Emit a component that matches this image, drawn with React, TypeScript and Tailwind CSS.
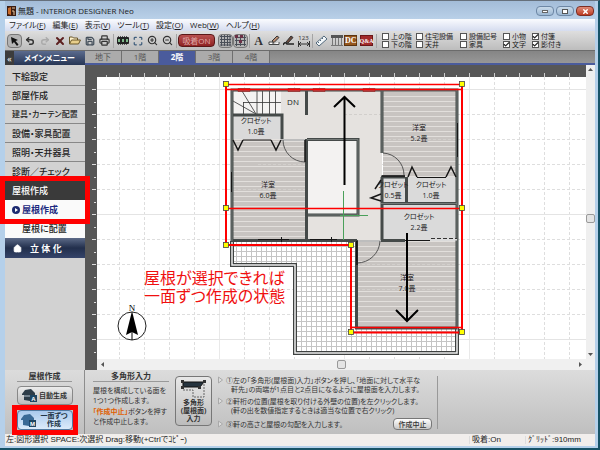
import { useState } from "react";
import type { ReactNode } from "react";
import { Check, Home, Maximize, Printer, Redo2, Save, Undo2, X, ZoomIn, ZoomOut } from "lucide-react";

const menus = [
  ["ファイル", "F"],
  ["編集", "E"],
  ["表示", "V"],
  ["ツール", "T"],
  ["設定", "O"],
  ["Web", "W"],
  ["ヘルプ", "H"],
];

const floors = ["地下", "1階", "2階", "3階", "4階"];

const sideItems = [
  { name: "下絵設定", size: "text-[9px]" },
  { name: "部屋作成", size: "text-[9px]" },
  { name: "建具・カーテン配置", size: "text-[8px]" },
  { name: "設備・家具配置", size: "text-[9px]" },
  { name: "照明・天井器具", size: "text-[9px]" },
  { name: "診断／チェック", size: "text-[9px]" },
];

const layers = [
  { items: ["上の階", "下の階"], checked: [false, false], width: "w-[34px]" },
  { items: ["住宅設備", "天井"], checked: [false, false], width: "w-[44px]" },
  { items: ["設備記号", "家具"], checked: [false, false], width: "w-[43px]" },
  { items: ["小物", "文字"], checked: [false, true], width: "w-[29px]" },
  { items: ["付箋", "影付き"], checked: [true, true], width: "w-[34px]" },
];

function Tool({ label, children, pressed }: { label: string; children: ReactNode; pressed?: boolean }) {
  return (
    <button
      aria-label={label}
      className={`flex h-[14px] w-[15px] items-center justify-center rounded-sm ${
        pressed ? "border border-[#777] bg-[#b4b4b4]" : ""
      }`}
    >
      {children}
    </button>
  );
}

function Separator() {
  return <div className="mx-px h-[14px] w-px bg-[#a5a5a5]" />;
}

function TitleBar() {
  return (
    <header className="flex h-[18px] items-center bg-linear-to-b from-[#a3bcd8] to-[#b9d0e8] pl-[2px] pt-[2px]">
      <svg width="9" height="10" viewBox="0 0 9 10">
        <rect width="9" height="10" fill="#3b1c10" />
        <path d="M1 2l3-1v8l-3-1z" fill="#c96a2a" />
        <path d="M5 2h3M5 5h2v4" stroke="#e9c7a0" fill="none" />
      </svg>
      <h1 className="ml-[2px] flex-1 text-[8px] leading-none text-[#1b1b1b]">無題 - INTERIOR DESIGNER Neo</h1>
      <div className="flex gap-[2px] pr-px">
        <button aria-label="最小化" className="flex h-[10px] w-[18px] items-center justify-center rounded-sm border border-[#6d87a5] bg-linear-to-b from-[#c9daea] to-[#9db8d3]">
          <span className="h-[3px] w-[6px] border border-[#666] bg-white" />
        </button>
        <button aria-label="最大化" className="flex h-[10px] w-[18px] items-center justify-center rounded-sm border border-[#6d87a5] bg-linear-to-b from-[#c9daea] to-[#9db8d3]">
          <span className="h-[5px] w-[6px] border border-[#555] bg-white" />
        </button>
        <button aria-label="閉じる" className="flex h-[10px] w-[18px] items-center justify-center rounded-sm border border-[#7c2d22] bg-linear-to-b from-[#dd8a78] to-[#bd3a20]">
          <X size={7} strokeWidth={5} color="#fff" />
        </button>
      </div>
    </header>
  );
}

function MenuBar() {
  return (
    <nav className="flex h-[12px] items-center gap-[7px] bg-linear-to-b from-[#fafbfe] to-[#d5dcef] pl-1">
      {menus.map(([label, key]) => (
        <button key={key} className="text-[8px] leading-none text-[#222]">
          {label}(<u>{key}</u>)
        </button>
      ))}
    </nav>
  );
}

function Toolbar() {
  return (
    <div className="flex h-[19px] items-center bg-linear-to-b from-[#dedede] to-[#bdbdbd] pl-[2px] text-[#333]">
      <Tool label="選択" pressed>
        <svg width="9" height="10" viewBox="0 0 9 10">
          <path d="M1 1l1 7 2-2 3 4 1.500-1.500-3-3.500 2.500-1z" fill="#111" />
        </svg>
      </Tool>
      <Tool label="元に戻す"><Undo2 size={10} strokeWidth={3.5} /></Tool>
      <Tool label="やり直し"><Redo2 size={10} strokeWidth={3.5} color="#aaa" /></Tool>
      <Tool label="削除"><X size={12} strokeWidth={4} color="#5c1f1f" /></Tool>
      <Tool label="開く">
        <svg width="12" height="9" viewBox="0 0 12 9">
          <path d="M.5 8V1h3l1 1h4v2" fill="#fff3cc" stroke="#6a5628" />
          <path d="M.5 8l2-4h9l-2 4z" fill="#e8cf8c" stroke="#6a5628" />
        </svg>
      </Tool>
      <Tool label="保存"><Save size={10} strokeWidth={3} color="#45505c" /></Tool>
      <Tool label="印刷"><Printer size={11} strokeWidth={2.5} /></Tool>
      <Separator />
      <Tool label="部材表示">
        <svg width="12" height="9" viewBox="0 0 12 9">
          <rect y="1" width="12" height="7" rx="1" fill="#222" />
          <path d="M1 3h2v3H1zM5 3h2v3H5zM9 3h2v3H9z" fill="#7fb88a" />
          <path d="M1 .5h10M1 8.500h10" stroke="#555" strokeDasharray="1 1" />
        </svg>
      </Tool>
      <Tool label="全体表示"><Maximize size={10} strokeWidth={3} color="#3f5e7d" /></Tool>
      <Tool label="拡大"><ZoomIn size={11} strokeWidth={2.5} /></Tool>
      <Tool label="縮小"><ZoomOut size={11} strokeWidth={2.5} /></Tool>
      <Separator />
      <button className="h-[13px] w-[37px] rounded-sm border border-[#5a1818] bg-linear-to-b from-[#b85050] to-[#8e2222] text-[8px] leading-none text-[#e0aaaa]">
        吸着ON
      </button>
      <div className="ml-[3px] flex">
        <Tool label="グリッド" pressed>
          <svg width="11" height="11" viewBox="0 0 11 11">
            <path d="M1.500 0v11M4.500 0v11M7.500 0v11M10 0v11M0 1.500h11M0 4.500h11M0 7.500h11M0 10h11" stroke="#4a4f58" />
          </svg>
        </Tool>
        <Tool label="グリッド吸着" pressed>
          <svg width="11" height="11" viewBox="0 0 11 11">
            <path d="M1.500 0v11M5.500 0v11M9.500 0v11M0 2.500h11M0 5.500h11M0 9.500h11" stroke="#4a4f58" />
            <path d="M0 0h3v3H0zM5 0h3v3H5zM4 5h3v3H4z" fill="#6b3146" />
          </svg>
        </Tool>
      </div>
      <Separator />
      <button aria-label="文字" className="w-[15px] font-['Liberation_Serif',serif] text-[12px] font-bold leading-none">A</button>
      <Tool label="消しゴム">
        <svg width="12" height="11" viewBox="0 0 12 11">
          <path d="M4 6l5-5 2 1.500-5 5z" fill="#b98b70" stroke="#333" />
          <path d="M1 7h4v2.500H1zM5 9.500h6V7" fill="#fff" stroke="#444" />
        </svg>
      </Tool>
      <Tool label="ペン">
        <svg width="12" height="11" viewBox="0 0 12 11">
          <path d="M3 7l5-6 2 1.500-5 5.500z" fill="#6b4a3c" stroke="#333" />
          <path d="M0 10q2-4 4-1h7" fill="none" stroke="#222" strokeWidth="1.500" />
        </svg>
      </Tool>
      <button aria-label="寸法" className="flex w-[15px] flex-col items-center text-[6px] leading-[6px]">
        123
        <svg width="12" height="6" viewBox="0 0 12 6">
          <path d="M.5 0v6M11.500 0v6M1 3h10M3 1L1 3l2 2M9 1l2 2-2 2" fill="none" stroke="#333" />
        </svg>
      </button>
      <Separator />
      <Tool label="定規">
        <svg width="13" height="12" viewBox="0 0 13 12">
          <path d="M1 8l8-7 3 3-8 7z" fill="#f3f8fb" stroke="#52697c" />
          <path d="M3 7l1 1M5 5l1 1M7 3l1 1" stroke="#52697c" />
        </svg>
      </Tool>
      <Tool label="一覧表">
        <svg width="12" height="11" viewBox="0 0 12 11">
          <path d="M0 0h12v3H0z" fill="#555" />
          <path d="M1.500 3v7M4.500 3v7M7.500 3v7M10.500 3v7M0 10.500h12" stroke="#777" />
        </svg>
      </Tool>
      <button className="h-[11px] w-[13px] border border-[#5c3410] bg-[#96561c] font-['Liberation_Serif',serif] text-[8px] font-bold leading-none text-white">DC</button>
      <button className="ml-[3px] mr-[2px] flex h-[11px] w-[13px] items-center justify-center border border-[#6b1717] bg-[#a12a2a] font-['Liberation_Serif',serif] text-[6px] font-bold leading-none text-white">Q&amp;A</button>
      <Separator />
      <div className="flex pl-1">
        {layers.map((group) => (
          <div key={group.items[0]} className={`flex flex-col ${group.width}`}>
            {group.items.map((name, i) => (
              <label key={name} className="flex h-[8px] items-center gap-[2px] whitespace-nowrap text-[7px] leading-none text-[#222]">
                <span className="relative flex">
                  <input
                    type="checkbox"
                    defaultChecked={group.checked[i]}
                    className="peer size-[7px] appearance-none border border-[#555] bg-white"
                  />
                  <Check size={7} strokeWidth={4} className="pointer-events-none absolute inset-0 hidden peer-checked:block" />
                </span>
                {name}
              </label>
            ))}
          </div>
        ))}
      </div>
    </div>
  );
}

function FloorTabs() {
  const [floor, setFloor] = useState("2階");

  return (
    <div className="flex h-[15px] border-t border-[#6b6b6b] bg-linear-to-b from-[#858585] to-[#9a9a9a]">
      <button aria-label="メニューを閉じる" className="w-[9px] bg-[#3c3c3c] text-[9px] leading-none text-white">«</button>
      <h2 className="flex w-[71px] items-center justify-center bg-linear-to-b from-[#5b6b8e] to-[#273655] text-[8px] font-bold leading-none text-white">
        メインメニュー
      </h2>
      <div className="flex flex-1 border-b-2 border-[#4a5b9c]">
        {floors.map((name) => (
          <button
            key={name}
            onClick={() => setFloor(name)}
            className={`w-[37px] border-r border-[#6f6f6f] text-[8px] leading-none ${
              name === floor ? "bg-[#4a5b9c] font-bold text-white" : "bg-[#ababab] text-[#555]"
            }`}
          >
            {name}
          </button>
        ))}
      </div>
    </div>
  );
}

function SideMenu() {
  return (
    <aside className="w-[80px] shrink-0 bg-[#d2d2d2] pt-[2px] text-[9px] text-[#222]">
      {sideItems.map((item) => (
        <button
          key={item.name}
          className={`block h-[19px] w-full whitespace-nowrap border-b border-[#888] pl-[7px] text-left font-medium leading-none ${item.size}`}
        >
          {item.name}
        </button>
      ))}
      <div className="relative">
        <button className="block h-[19px] w-full bg-[#3a3a3a] pl-[7px] text-left font-medium leading-none text-white">屋根作成</button>
        <button className="flex h-[19px] w-full items-center gap-[2px] bg-[#fafafa] pl-[7px] font-bold leading-none text-[#1c2a80]">
          <svg width="8" height="8" viewBox="0 0 8 8">
            <circle cx="4" cy="4" r="4" fill="#1c2a70" />
            <path d="M3 2l3 2-3 2z" fill="#fff" />
          </svg>
          屋根作成
        </button>
        <div className="pointer-events-none absolute -inset-[5px] z-10 border-[5px] border-[#f00]" />
      </div>
      <button className="block h-[19px] w-full bg-[#fafafa] pl-[17px] text-left font-medium leading-none">屋根に配置</button>
      <button className="flex h-[20px] w-full items-center gap-2 bg-linear-to-b from-[#5d6b88] via-[#222f4c] to-[#35446a] pl-2 font-bold leading-none text-white">
        <Home size={9} fill="#fff" color="#fff" />
        立 体 化
      </button>
    </aside>
  );
}

const rooms = [
  { x: 256, y: 122, lines: ["クロゼット", "1.0畳"] },
  { x: 268, y: 186, lines: ["洋室", "6.0畳"] },
  { x: 419, y: 129, lines: ["洋室", "5.2畳"] },
  { x: 393, y: 186, lines: ["クロゼット", "0.5畳"] },
  { x: 431, y: 186, lines: ["クロゼット", "1.0畳"] },
  { x: 419, y: 218, lines: ["クロゼット", "2.2畳"] },
  { x: 407, y: 279, lines: ["洋室", "7.0畳"] },
];

const handles = [
  [226, 83],
  [462, 83],
  [226, 207],
  [462, 207],
  [226, 244],
  [351, 244],
  [351, 331],
  [462, 331],
];

const columns = Array.from({ length: 19 }, (_, i) => 119.5 + i * 25);
const rows = Array.from({ length: 11 }, (_, i) => 88.5 + i * 25);

function FloorPlan() {
  return (
    <svg viewBox="85 64 501 295" preserveAspectRatio="xMinYMin slice" className="absolute inset-0 size-full">
      <defs>
        <pattern id="tatami" width="6" height="5" patternUnits="userSpaceOnUse">
          <rect width="6" height="5" fill="#c8c4c1" />
          <path d="M0 .5h6" stroke="#e2dfdc" />
        </pattern>
        <pattern id="terrace" x="1" y="0" width="5" height="5" patternUnits="userSpaceOnUse">
          <rect width="5" height="5" fill="#fff" />
          <path d="M0 .5h5M.5 0v5" stroke="#c4c4c4" />
        </pattern>
      </defs>

      {/* rulers and grid */}
      <path d="M85 64h2000v2000H85z" fill="#575757" />
      <path d="M97 76h2000v2000H97z" fill="#fff" />
      {columns.map((x, i) => (
        <g key={x}>
          <path d={`M${x} 72v4M${x - 13} 74v2`} stroke="#ccc" />
          <path d={`M${x} 76v290`} stroke={i % 5 === 4 ? "#e9e9e9" : "#dedede"} strokeDasharray={i % 5 === 4 ? undefined : "3 2"} />
        </g>
      ))}
      {rows.map((y, i) => (
        <g key={y}>
          <path d={`M92 ${y}h4M94 ${y + 13}h2`} stroke="#ddd" />
          <path d={`M97 ${y}h489`} stroke={i % 5 === 0 ? "#e4e4e4" : "#dedede"} strokeDasharray={i % 5 === 0 ? undefined : "3 2"} />
        </g>
      ))}

      {/* terrace */}
      <path d="M231.500 240v24.500h63v87.500h163V240z" fill="url(#terrace)" />
      <path d="M232 240v24h63v88h162v-26" fill="none" stroke="#3f4241" strokeWidth="4" />
      <path d="M232 240v24h63v88h162v-26" fill="none" stroke="#eee" strokeWidth="1.500" />

      {/* room fills */}
      <path d="M232 89h150v151H232z" fill="#e5e2df" />
      <path d="M233 90h48v24h-48z" fill="#f4f3f2" />
      <path d="M233 115h48v23h-48z" fill="#dadada" />
      <path d="M233 139h72v100h-72z" fill="url(#tatami)" />
      <path d="M308 139h49v75h-49z" fill="#f3f2f1" />
      <path d="M383 90h74v86h-74z" fill="url(#tatami)" />
      <path d="M382 176h75v64h-75z" fill="#dadada" />
      <path d="M357 240h100v87H357z" fill="url(#tatami)" />
      <path d="M281 138h25v2h-25zM357 239h24v2h-24z" fill="#bdbdbd" />
      <path d="M233 188.500h73M344 113.500h38M258 163.500h48M383 138.500h74M357 263.500h100M357 288.500h100" stroke="#d2cfcc" strokeDasharray="3 2" />

      {/* stairs */}
      <path d="M257 90v23M262.500 90v23M269.500 90v23M275.500 90v23M243 101.500h38M233 100l23 13M242 90l14 23M243.500 101v12" fill="none" stroke="#333" strokeWidth=".8" />

      {/* walls */}
      <g fill="none" stroke="#454a49" strokeWidth="3">
        <path d="M232 240V89h225v238M231 239.500h125M356.500 239v88h101" />
        <path d="M233 114h49v24M306.500 90v24M306.500 239V138M307 138.500h51v75.500h-50" />
        <path d="M382 90v62M381 176h24M406.500 176v26M382 176v63M381 202.500h76M355 239.500h2M381 239.500h24" />
      </g>
      <g fill="none" stroke="#7f8583" strokeWidth=".8">
        <path d="M232 240V89h225v238M307 138.500h51v75.500h-50M381 202.500h76M382 90v62" />
      </g>
      <g fill="none" stroke="#171717" strokeWidth="1">
        <path d="M243 139h28M417 176.500h29M405 239.500h25M231.500 171v20M457.500 122v34M356.500 240v20" />
        <path d="M233 139l5 10 5-10M271 139l5 10 5-10M408 176l4-10 5 10M446 176l5-10 5 10M381 193l-10 4 10 3M381 179l-6 9" strokeWidth="1.500" />
        <path d="M283 139a22 22 0 0 0 22 22M383 152a22 22 0 0 1 21 22M380 240a23 23 0 0 1-23 22" stroke="#555" />
        <path d="M305 139v22M382 175h23M357 240v24" strokeWidth="1.500" />
        <path d="M258 238.500h31M310 238.500h27M281.500 236v5M331.500 236v5" />
      </g>
      <path d="M431 238.500h26" stroke="#ddd" strokeWidth="2" />
      <path d="M431 237.500h26" stroke="#333" strokeDasharray="4 2" />
      <path d="M343.500 190v49M340 214.500h28" fill="none" stroke="#4aa05a" />

      {/* labels */}
      <g fontSize="8" textAnchor="middle" fill="#222">
        <text x="293" y="104">DN</text>
      </g>
      <g fontSize="7" textAnchor="middle" fill="#222">
        {rooms.map((room) =>
          room.lines.map((line, i) => (
            <text key={`${room.x}-${room.y}-${line}`} x={room.x} y={room.y + i * 11}>
              {line}
            </text>
          ))
        )}
      </g>

      {/* slope arrows */}
      <path d="M344.500 184V97M334 106l10.500-10 10.500 10M407 232v88M396 309l11 11 11-11" fill="none" stroke="#000" strokeWidth="2" />

      {/* roof outline */}
      <path d="M238 87.500h12v3h-12zM288 87.500h12v3h-12zM313 87.500h12v3h-12zM363 87.500h12v3h-12z" fill="#a44" stroke="#922" strokeWidth=".6" />
      <path d="M226 83.500h236M226 88.500h236M226 207.500h236M351 326.500h111" stroke="#f00" strokeWidth="1.500" />
      <path d="M226 83v161h125v87.500h111V83" fill="none" stroke="#f00" strokeWidth="2" />
      {handles.map(([x, y]) => (
        <rect key={`${x}-${y}`} x={x - 2.5} y={y - 2.5} width="5" height="5" fill="#ff0" stroke="#444" strokeWidth=".8" />
      ))}

      {/* compass */}
      <circle cx="132" cy="325" r="14" fill="#fff" stroke="#222" />
      <path d="M132 310l6 24-6-3-6 3z" fill="#000" />
      <path d="M132 331v8" stroke="#000" />
      <text x="132" y="310" fontSize="9" textAnchor="middle" fontFamily="Liberation Serif, serif">N</text>
    </svg>
  );
}

function Workspace() {
  return (
    <main className="flex min-w-0 flex-1 flex-col bg-[#f0f0f0]">
      <div className="flex min-h-0 flex-1">
        <div className="relative flex-1 overflow-hidden">
          <FloorPlan />
          <p className="absolute left-[59px] top-[204px] whitespace-nowrap text-[16px] leading-[18px] text-[#f01010]">
            屋根が選択できれば
            <br />
            一面ずつ作成の状態
          </p>
        </div>
        <div className="flex w-[9px] flex-col items-center justify-between bg-[#efefef] py-[3px]">
          <svg width="5" height="3" viewBox="0 0 5 3"><path d="M0 3l2.500-3L5 3z" fill="#555" /></svg>
          <div className="mt-3 h-[9px] w-full rounded-xs border border-[#999] bg-[#e4e4e4]" />
          <svg width="5" height="3" viewBox="0 0 5 3"><path d="M0 0h5L2.500 3z" fill="#555" /></svg>
        </div>
      </div>
      <div className="flex h-[11px] pr-[9px]">
        <div className="w-3 bg-[#575757]" />
        <div className="flex flex-1 items-center justify-between px-1">
          <svg width="3" height="5" viewBox="0 0 3 5"><path d="M3 0v5L0 2.500z" fill="#555" /></svg>
          <div className="size-[9px] rounded-xs border border-[#999] bg-[#e4e4e4]" />
          <svg width="3" height="5" viewBox="0 0 3 5"><path d="M0 0v5l3-2.500z" fill="#555" /></svg>
        </div>
      </div>
    </main>
  );
}

function RoofIcon({ letter }: { letter: string }) {
  return (
    <svg width="15" height="13" viewBox="0 0 15 13">
      <path d="M0 5l3-4 6-1 4 4v2H8v6l-6-1V6H0z" fill={letter === "M" ? "#3a6a96" : "#2d3c48"} />
      {letter === "A" && <path d="M2 7h6" stroke="#b9c6d2" />}
      <rect x="8" y="6" width="7" height="7" fill="#1d4562" />
      <text x="11.500" y="12" fontSize="6" textAnchor="middle" fill="#fff" fontFamily="Liberation Sans, sans-serif">{letter}</text>
    </svg>
  );
}

function Arrow() {
  return (
    <svg width="5" height="8" viewBox="0 0 5 8" className="shrink-0">
      <path d="M.5 1l4 3-4 3z" fill="#ddd" stroke="#aaa" />
    </svg>
  );
}

function Steps() {
  return (
    <ol className="flex flex-col gap-[3px]">
      <li className="flex gap-[3px]">
        <Arrow />
        <span>
          ①左の「多角形(屋根面)入力」ボタンを押し、「地面に対して水平な
          <br />
          <span className="ml-[5px]">軒先」の両端が1点目と2点目になるように屋根面を入力します。</span>
        </span>
      </li>
      <li className="flex gap-[3px]">
        <Arrow />
        <span>
          ②軒桁の位置(屋根を取り付ける外壁の位置)を左クリックします。
          <br />
          <span className="ml-[5px]">(軒の出を数値指定するときは適当な位置で右クリック)</span>
        </span>
      </li>
      <li className="flex items-center gap-[3px]">
        <Arrow />
        <span className="flex-1">③軒の高さと屋根の勾配を入力します。</span>
        <button className="h-[12px] w-[39px] rounded-sm border border-[#777] bg-linear-to-b from-white to-[#c8c8c8] text-[7px] font-medium leading-none">作成中止</button>
      </li>
    </ol>
  );
}

function BottomPanel() {
  return (
    <section className="flex h-[64px] bg-linear-to-b from-[#dcdcdc] to-[#bfbfbf] text-[7px] leading-[9px] text-[#333]">
      <div className="flex w-[80px] flex-col items-center border-r border-[#8d8d8d]">
        <h3 className="w-[55px] border-b border-[#999] py-px text-center text-[8px] font-bold">屋根作成</h3>
        <button className="mt-1 flex h-[19px] w-[56px] items-center justify-center gap-[2px] rounded-sm border border-[#888] bg-linear-to-b from-[#ececec] to-[#bcbcbc] font-bold">
          <RoofIcon letter="A" />
          自動生成
        </button>
        <div className="relative mt-[5px]">
          <button className="flex h-[20px] w-[56px] items-center justify-center gap-1 rounded-sm border border-[#52799f] bg-linear-to-b from-[#a9c9ec] to-[#dcebfa] font-bold leading-[8px] text-[#234]">
            <RoofIcon letter="M" />
            <span>一面ずつ<br />作成</span>
          </button>
          <div className="pointer-events-none absolute -inset-[5px] border-[5px] border-[#f00]" />
        </div>
      </div>
      <div className="w-[84px] pl-2">
        <h3 className="border-b border-[#999] py-px text-center text-[8px] font-bold">多角形入力</h3>
        <p className="mt-1 whitespace-nowrap leading-[10px]">
          屋根を構成している面を
          <br />
          1つ1つ作成します。
        </p>
        <p className="mt-px whitespace-nowrap leading-[10px]">
          <b className="text-[#e06000]">「作成中止」</b>ボタンを押す
          <br />
          と作成中止します。
        </p>
      </div>
      <button className="ml-[6px] mt-[6px] flex h-[50px] w-[37px] flex-col items-center justify-center rounded-sm border border-[#777] bg-linear-to-b from-[#e8e8e8] to-[#bcbcbc] font-bold leading-[8px]">
        <svg width="25" height="19" viewBox="0 0 25 19">
          <path d="M2 2h21l-4 5H2z" fill="#26343f" stroke="#111" />
          <path d="M2 7v3h10v7h11V2" fill="none" stroke="#666" strokeDasharray="2 1" />
          <path d="M0 0h3v3H0zM22 0h3v3h-3zM0 6h3v3H0zM17 6h3v3h-3z" fill="#333" />
        </svg>
        <span className="whitespace-nowrap">多角形<br />(屋根面)<br />入力</span>
      </button>
      <div className="mb-[5px] mt-[6px] w-[226px] whitespace-nowrap border-r border-[#999] pl-[6px] pr-[5px]">
        <Steps />
      </div>
    </section>
  );
}

function StatusBar() {
  return (
    <footer className="flex h-[12px] items-center bg-[#f1eeec] font-['Liberation_Sans','Noto_Sans_CJK_JP',sans-serif] text-[8px] leading-none text-[#222]">
      <span className="flex-1 pl-px">左:図形選択 SPACE:次選択 Drag:移動(+Ctrlでｺﾋﾟｰ)</span>
      <span className="w-[56px] border-l border-[#ddd] pl-[2px]">吸着:On</span>
      <span className="w-[70px] border-l border-[#ddd] pl-[2px]">ｸﾞﾘｯﾄﾞ:910mm</span>
    </footer>
  );
}

export default function App() {
  return (
    <div className="flex h-screen flex-col overflow-hidden border-b-2 border-r-2 border-t border-b-[#175266] border-r-[#175266] border-t-[#66707c] bg-[#b5d0ea] pb-[2px] pl-[5px] pr-[3px] font-['Open_Sans','Noto_Sans_CJK_JP',sans-serif] [font-feature-settings:'palt']">
      <TitleBar />
      <MenuBar />
      <Toolbar />
      <FloorTabs />
      <div className="flex min-h-0 flex-1">
        <SideMenu />
        <Workspace />
      </div>
      <BottomPanel />
      <StatusBar />
    </div>
  );
}
